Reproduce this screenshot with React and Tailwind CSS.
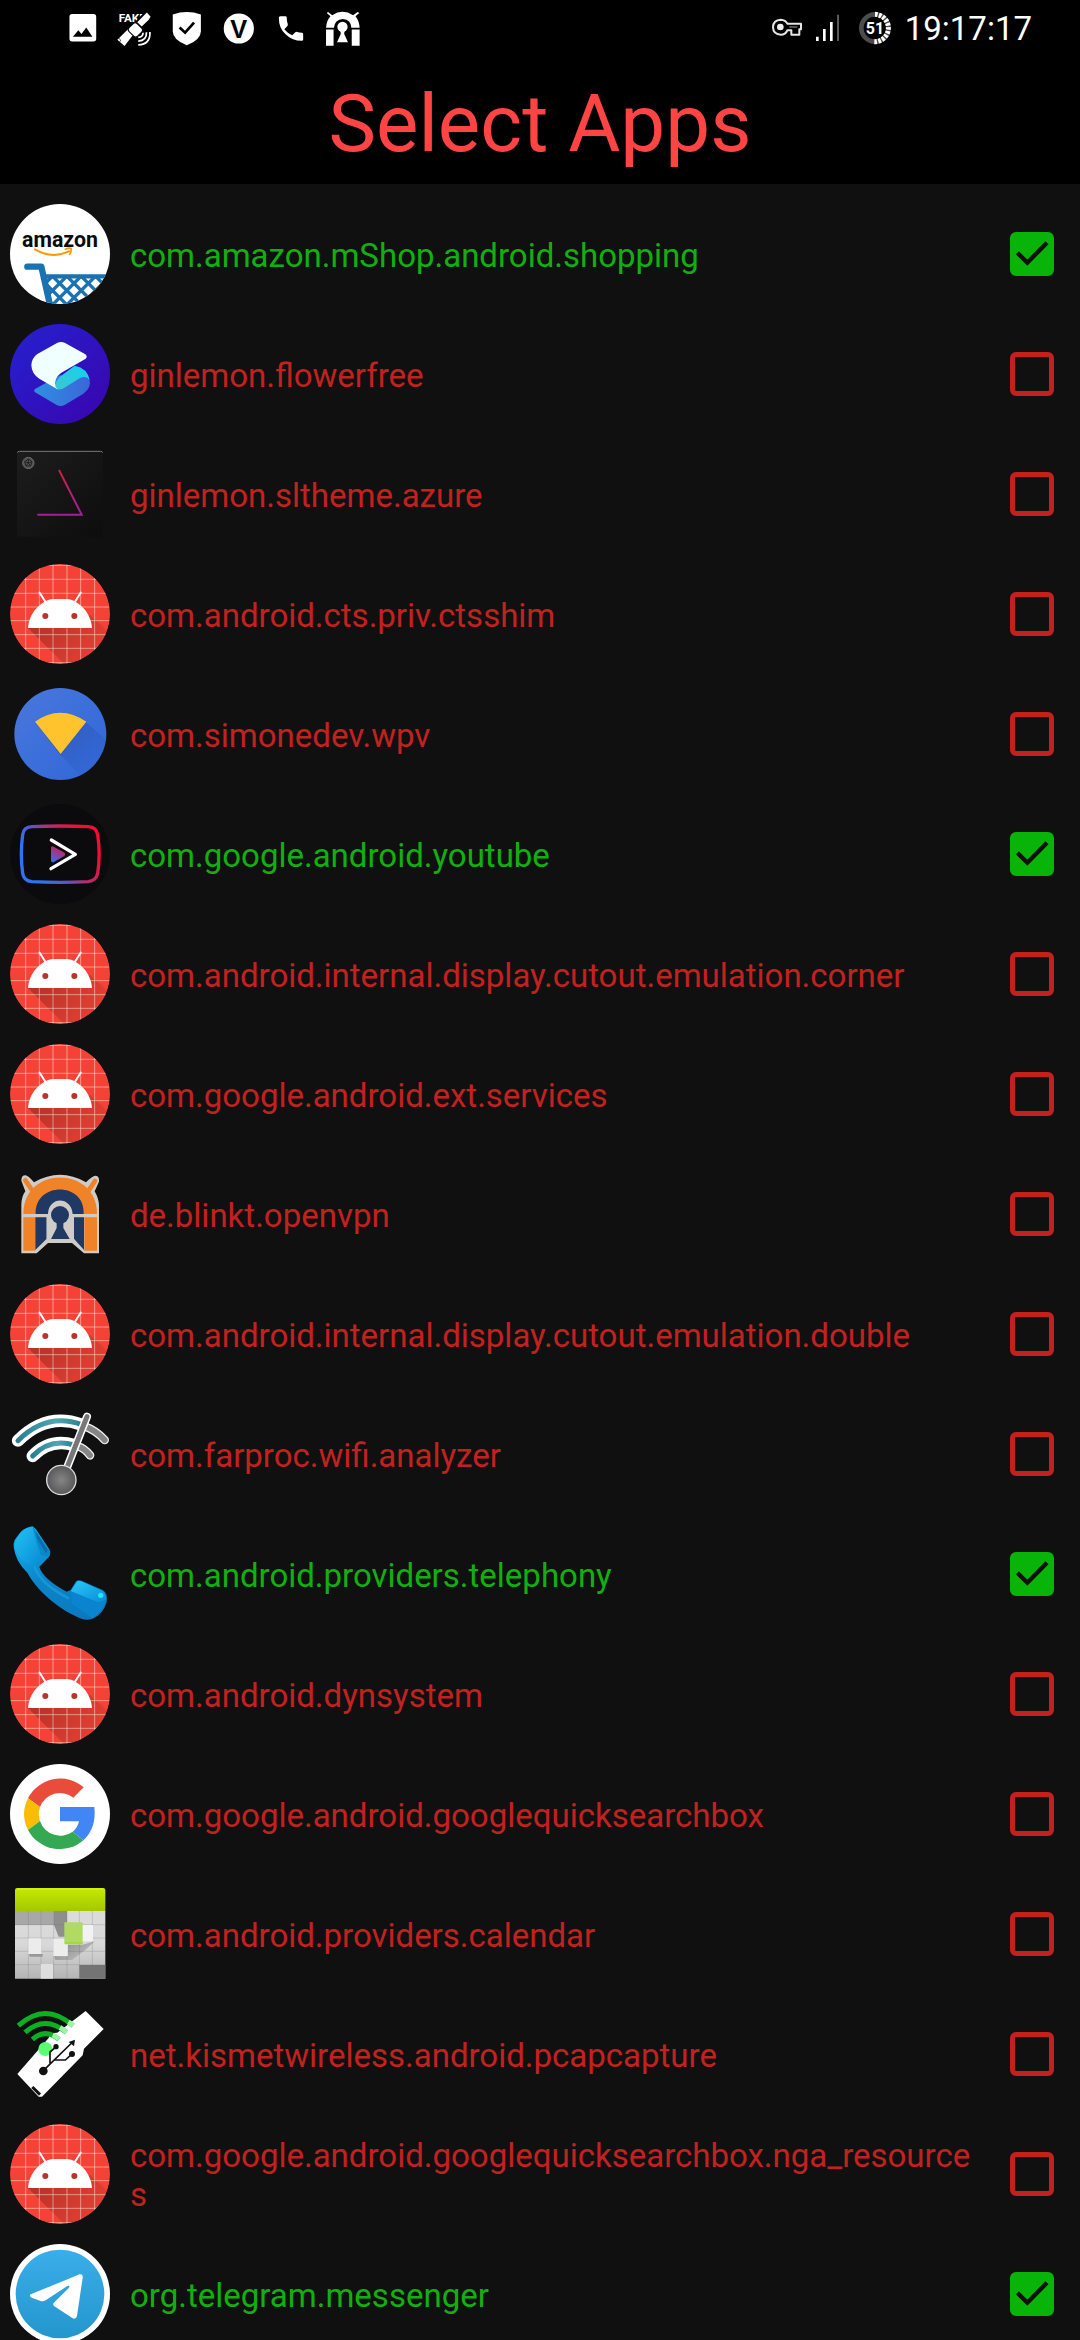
import { useState } from "react";

const statusIcon = "h-9 w-9 shrink-0";

function PictureIcon() {
  return (
    <svg className={statusIcon} viewBox="189 32 105 105" aria-hidden="true">
      <rect x="202" y="44" width="78" height="80" rx="8" fill="#fff" />
      <path d="M212 110 L228 91 L237 102 L251 83 L269 110z" fill="#000" />
    </svg>
  );
}

function SatelliteIcon() {
  return (
    <svg className={statusIcon} viewBox="340 32 105 105" aria-hidden="true">
      <text x="345" y="67" fill="#fff" fontFamily="Roboto, sans-serif" fontWeight="700" fontSize="34">FAKE</text>
      <path d="M423 35 L443 57 L409 92 L385 74z" fill="#000" />
      <path d="M427 39 L438 52 L432 61 L412 80 L399 68z M372 88 L387 104 L362 137 L341 119z" fill="#fff" />
      <rect x="376" y="73" width="35" height="33" rx="8" transform="rotate(45 393 90)" fill="#fff" stroke="#000" strokeWidth="3" />
      <path d="M343 112 L351 120 L347 126" stroke="#000" strokeWidth="2" fill="none" />
      <g fill="none" stroke="#fff" strokeWidth="5">
        <path d="M416 98 Q416 110 402 112" />
        <path d="M426 97 Q427 121 402 123" />
        <path d="M436 96 Q438 132 402 134" />
      </g>
    </svg>
  );
}

function ShieldIcon() {
  return (
    <svg className={statusIcon} viewBox="491 32 105 105" aria-hidden="true">
      <path d="M502 45 Q543 31 584 45 V94 Q584 119 543 135 Q502 119 502 94z" fill="#fff" />
      <path d="M522 83 L538 98 L564 69" fill="none" stroke="#000" strokeWidth="8" />
    </svg>
  );
}

function VIcon() {
  return (
    <svg className={statusIcon} viewBox="642 32 105 105" aria-hidden="true">
      <circle cx="694" cy="86" r="44" fill="#fff" />
      <text x="694" y="113" textAnchor="middle" fontFamily="Liberation Sans, sans-serif" fontWeight="700" fontSize="74">V</text>
    </svg>
  );
}

function CallIcon() {
  return (
    <svg className={statusIcon} viewBox="793 32 105 105" aria-hidden="true">
      <path
        d="M814 50 H829 Q833 50 833 54 Q833 64 836 73 Q837 76 835 79 L826 88 Q835 99 849 106 L858 97 Q860 95 863 96 Q870 98 877 98 Q881 98 881 102 V118 Q881 122 877 122 Q848 122 829 102 Q810 84 810 55 Q810 50 814 50z"
        fill="#fff"
      />
    </svg>
  );
}

function TunnelIcon() {
  return (
    <svg className={statusIcon} viewBox="944 32 105 105" aria-hidden="true">
      <path d="M947 84 Q948 63 960 50 L949 41 L953 38 L965 47 Q995 27 1026 47 L1039 38 L1044 41 L1033 50 Q1044 64 1045 84 H1021 Q1020 60 996 58 Q972 60 970 84z" fill="#fff" />
      <path d="M947 89 H969 V136 H947z M1022 89 H1045 V136 H1022z" fill="#fff" />
      <circle cx="995" cy="81" r="15" fill="#fff" />
      <path d="M989 90 H1001 L1000 102 L1011 126 H979 L990 102z" fill="#fff" />
    </svg>
  );
}

function KeyIcon() {
  return (
    <svg className={statusIcon} viewBox="207 30 108 108" aria-hidden="true">
      <path
        d="M262 71 H303 V88 H298 V104 H274 V91 H262 Q257 104 242 104 Q219 102 219 81 Q220 60 242 59 Q257 60 262 71z"
        fill="none" stroke="#e6e6e6" strokeWidth="6" strokeLinejoin="round"
      />
      <path d="M268 81 H292" stroke="#777" strokeWidth="4" />
      <circle cx="241" cy="81" r="10" fill="#eee" />
    </svg>
  );
}

function SignalIcon() {
  return (
    <svg className={statusIcon} viewBox="327 30 108 108" aria-hidden="true">
      <path d="M348 110 h8 v13 h-8z M369 87 h8 v36 h-8z M390 66 h8 v57 h-8z" fill="#fff" />
      <path d="M411 44 h6 v79 h-6z" fill="#5a5a5a" />
    </svg>
  );
}

function BatteryIcon() {
  return (
    <svg className={statusIcon} viewBox="471 30 108 108" role="img" aria-label="Battery 51 percent">
      <circle cx="525" cy="84" r="41" fill="none" stroke="#4c4c4c" strokeWidth="14" />
      <path d="M525 43 A41 41 0 0 1 523 125" fill="none" stroke="#fff" strokeWidth="15" strokeDasharray="8 4" />
      <text x="525" y="101" textAnchor="middle" fill="#fff" fontFamily="Roboto, sans-serif" fontWeight="700" fontSize="48">51</text>
    </svg>
  );
}

const appIcon = "h-[100px] w-[100px] shrink-0";

function AmazonIcon() {
  return (
    <svg className={appIcon} viewBox="30 42 300 300" aria-hidden="true">
      <defs>
        <clipPath id="amazon-disc"><circle cx="180" cy="192" r="150" /></clipPath>
        <clipPath id="amazon-basket"><path d="M136 256 H340 V350 H152z" /></clipPath>
      </defs>
      <circle cx="180" cy="192" r="150" fill="#fff" />
      <text x="180" y="171" textAnchor="middle" fontFamily="Roboto, sans-serif" fontWeight="700" fontSize="64" fill="#0a0a0a">amazon</text>
      <path d="M105 178 Q155 208 207 184" fill="none" stroke="#f90" strokeWidth="6" strokeLinecap="round" />
      <path d="M196 178 Q210 172 214 176 Q214 184 209 193" fill="none" stroke="#f90" strokeWidth="5" strokeLinecap="round" />
      <g clipPath="url(#amazon-disc)" fill="none" stroke="#1a72b0">
        <path d="M82 230 H124 L150 345" strokeWidth="19" strokeLinecap="round" strokeLinejoin="round" />
        <path d="M136 259 H340" strokeWidth="13" />
        <g clipPath="url(#amazon-basket)" strokeWidth="10">
          <path d="M70 256 l100 100 M112 256 l100 100 M155 256 l100 100 M198 256 l100 100 M241 256 l100 100 M284 256 l100 100" />
          <path d="M160 256 l-100 100 M203 256 l-100 100 M246 256 l-100 100 M289 256 l-100 100 M332 256 l-100 100 M375 256 l-100 100" />
        </g>
      </g>
    </svg>
  );
}

function SmartLauncherIcon() {
  return (
    <svg className={appIcon} viewBox="30 402 300 300" aria-hidden="true">
      <defs>
        <linearGradient id="sl-bg" x1="0" y1="0" x2="1" y2="1">
          <stop offset="0" stopColor="#2422d0" />
          <stop offset="1" stopColor="#3a04ae" />
        </linearGradient>
        <linearGradient id="sl-low" x1="0" y1="0" x2="1" y2="0">
          <stop offset="0" stopColor="#2e8fe2" />
          <stop offset="1" stopColor="#3a66d8" />
        </linearGradient>
        <linearGradient id="sl-mid" x1="0" y1="1" x2="1" y2="0">
          <stop offset="0" stopColor="#3cc6d0" />
          <stop offset="1" stopColor="#12d2f0" />
        </linearGradient>
      </defs>
      <circle cx="180" cy="552" r="150" fill="url(#sl-bg)" />
      <path d="M105 597 L180 556 L246 560 Q262 556 268 566 Q276 592 250 611 L194 645 Q182 651 170 645 L104 606 Q100 601 105 597z" fill="url(#sl-low)" />
      <path d="M180 560 L224 527 Q262 534 269 570 Q259 556 240 564 L192 594 Q182 600 170 598 Q158 584 180 560z" fill="url(#sl-mid)" />
      <path d="M171 459 Q182 453 194 458 L256 493 Q264 500 257 506 L184 548 Q160 565 167 590 L172 598 L118 566 Q95 552 94 526 Q95 504 112 492z" fill="#f0ffff" />
    </svg>
  );
}

function AzureIcon() {
  return (
    <svg className={appIcon} viewBox="30 762 300 300" aria-hidden="true">
      <defs>
        <linearGradient id="azure-bg" x1="0" y1="0" x2="1" y2="1">
          <stop offset="0" stopColor="#1d1d1d" />
          <stop offset="1" stopColor="#0d0d0d" />
        </linearGradient>
        <linearGradient id="azure-line" gradientUnits="userSpaceOnUse" x1="178" y1="840" x2="210" y2="975">
          <stop offset="0" stopColor="#cf2038" />
          <stop offset="1" stopColor="#a0209a" />
        </linearGradient>
      </defs>
      <rect x="51" y="783" width="258" height="257" rx="6" fill="url(#azure-bg)" />
      <path d="M52 788 Q53 784 58 784 H302 Q307 784 308 788" fill="none" stroke="#777" strokeWidth="3" />
      <circle cx="85" cy="819" r="17" fill="#555" stroke="#666" strokeWidth="3" />
      <path d="M85 807 L96 815 L92 828 H78 L74 815z M85 807 V819 M74 815 L85 819 L96 815 M78 828 L85 819 L92 828" fill="none" stroke="#222" strokeWidth="3" />
      <path d="M177 840 L245 974 H112" fill="none" stroke="url(#azure-line)" strokeWidth="6" />
    </svg>
  );
}

function AndroidIcon() {
  return (
    <svg className={appIcon} viewBox="30 42 300 300" aria-hidden="true">
      <defs>
        <clipPath id="android-disc"><circle cx="180" cy="192" r="150" /></clipPath>
        <linearGradient id="android-shade" gradientUnits="userSpaceOnUse" x1="120" y1="230" x2="250" y2="330">
          <stop offset="0" stopColor="#000" stopOpacity="0.24" />
          <stop offset="1" stopColor="#000" stopOpacity="0.08" />
        </linearGradient>
      </defs>
      <g clipPath="url(#android-disc)">
        <circle cx="180" cy="192" r="150" fill="#f44336" />
        <path d="M84 234 L200 350 H340 V260 L270 194z" fill="url(#android-shade)" />
        <path
          d="M77 40 V345 M118 40 V345 M159 40 V345 M201 40 V345 M242 40 V345 M284 40 V345 M30 46 H330 M30 88 H330 M30 130 H330 M30 171 H330 M30 212 H330 M30 254 H330 M30 295 H330 M30 338 H330"
          stroke="#fff" strokeOpacity="0.45" strokeWidth="3"
        />
      </g>
      <path d="M84 234 C86 196 112 163 144 150 Q152 147 161 147 H199 Q208 147 216 150 C248 163 274 196 276 234z" fill="#fff" />
      <path d="M119 128 L138 158 M242 128 L223 158" stroke="#fff" strokeWidth="6" strokeLinecap="round" />
      <circle cx="136" cy="198" r="9" fill="#b8342b" />
      <circle cx="223" cy="198" r="9" fill="#b8342b" />
    </svg>
  );
}

function WpvIcon() {
  return (
    <svg className={appIcon} viewBox="30 402 300 300" aria-hidden="true">
      <defs>
        <linearGradient id="wpv-bg" x1="0" y1="0" x2="1" y2="1">
          <stop offset="0" stopColor="#4a78dc" />
          <stop offset="1" stopColor="#2f66d8" />
        </linearGradient>
        <linearGradient id="wpv-shade" gradientUnits="userSpaceOnUse" x1="210" y1="550" x2="280" y2="640">
          <stop offset="0" stopColor="#1c3f90" stopOpacity="0.3" />
          <stop offset="1" stopColor="#1c3f90" stopOpacity="0.05" />
        </linearGradient>
        <clipPath id="wpv-disc"><circle cx="181" cy="552" r="138" /></clipPath>
      </defs>
      <circle cx="181" cy="552" r="138" fill="url(#wpv-bg)" />
      <path d="M182 614 L260 518 L340 590 V700 H262z" fill="url(#wpv-shade)" clipPath="url(#wpv-disc)" />
      <path d="M106 518 Q180 468 259 518 L182 616z" fill="#254fa8" fillOpacity="0.6" />
      <path d="M105 515 Q180 461 259 515 L182 612z" fill="#ffc42d" />
    </svg>
  );
}

function VancedIcon() {
  return (
    <svg className={appIcon} viewBox="30 762 300 300" aria-hidden="true">
      <defs>
        <linearGradient id="vanced-frame" gradientUnits="userSpaceOnUse" x1="90" y1="960" x2="260" y2="850">
          <stop offset="0.1" stopColor="#2f72f4" />
          <stop offset="0.35" stopColor="#5a58c8" />
          <stop offset="0.6" stopColor="#b0306c" />
          <stop offset="0.95" stopColor="#f60c36" />
        </linearGradient>
        <linearGradient id="vanced-play" x1="0" y1="1" x2="0.5" y2="0">
          <stop offset="0" stopColor="#2f72f4" />
          <stop offset="1" stopColor="#d01c5c" />
        </linearGradient>
      </defs>
      <circle cx="180" cy="912" r="150" fill="#0b0b0d" />
      <path d="M96 830 Q180 826 264 830 Q289 831 293 854 Q302 912 293 970 Q289 993 264 995 Q180 999 96 995 Q71 993 68 970 Q60 912 68 854 Q71 831 96 830z" fill="none" stroke="url(#vanced-frame)" strokeWidth="10" />
      <path d="M153 892 Q155 887 161 890 L194 908 Q198 913 194 917 L161 937 Q154 938 153 932z" fill="url(#vanced-play)" />
      <path d="M154 870 L226 913 L153 956" fill="none" stroke="#fff" strokeWidth="10" strokeLinecap="round" strokeLinejoin="round" />
    </svg>
  );
}

function OpenVpnIcon() {
  return (
    <svg className={appIcon} viewBox="30 42 300 300" aria-hidden="true">
      <path d="M64 310 V165 Q64 140 76 124 L64 92 Q64 76 76 76 Q84 76 102 97 Q180 52 258 97 Q278 76 287 77 Q299 78 297 95 L284 124 Q296 145 297 165 V310 H252 L216 279 H144 L110 310z" fill="#cfcbc6" />
      <path d="M76 91 L96 120 M285 93 L264 124" stroke="#f08228" strokeWidth="14" strokeLinecap="round" />
      <path d="M70 192 C70 46 291 46 291 192z" fill="#f08228" />
      <path d="M70 202 H106 V302 H70z M253 202 H291 V302 H253z" fill="#f08228" />
      <path d="M107 192 C104 94 256 94 251 192z M106 202 H140 V266 L106 300z M222 202 H252 V300 L222 266z" fill="#1f3864" />
      <path d="M144 192 C146 138 214 138 218 192 L222 202 V268 H140 V202z" fill="#cfcbc6" />
      <circle cx="180" cy="195" r="27" fill="#1f3864" />
      <path d="M170 218 H190 V234 L209 267 H153 L170 234z" fill="#1f3864" />
    </svg>
  );
}

function WifiAnalyzerIcon() {
  return (
    <svg className={appIcon} viewBox="30 42 300 300" aria-hidden="true">
      <defs>
        <linearGradient id="wa-wave" x1="0" y1="0" x2="1" y2="0">
          <stop offset="0" stopColor="#2a7f92" />
          <stop offset="0.6" stopColor="#4fa6b4" />
          <stop offset="1" stopColor="#2a7f92" />
        </linearGradient>
        <radialGradient id="wa-ball">
          <stop offset="0" stopColor="#858585" />
          <stop offset="1" stopColor="#58585a" />
        </radialGradient>
      </defs>
      <g fill="none" strokeLinecap="round">
        <path d="M54 152 Q140 66 245 104 M98 198 Q150 144 222 165" stroke="#fff" strokeWidth="37" />
        <path d="M252 108 Q290 122 314 150 M232 168 Q256 176 270 196" stroke="#f2f2f2" strokeWidth="26" />
        <path d="M252 108 Q290 122 314 150 M232 168 Q256 176 270 196" stroke="#858585" strokeWidth="18" />
        <path d="M54 152 Q140 66 245 104" stroke="url(#wa-wave)" strokeWidth="15" />
        <path d="M98 198 Q150 144 222 165" stroke="url(#wa-wave)" strokeWidth="15" />
        <path d="M261 80 L202 230" stroke="#fff" strokeWidth="24" />
        <path d="M261 80 L202 230" stroke="#77777a" strokeWidth="15" />
      </g>
      <circle cx="184" cy="270" r="44" fill="url(#wa-ball)" stroke="#ddd" strokeWidth="4" />
    </svg>
  );
}

function TelephonyIcon() {
  return (
    <svg className={appIcon} viewBox="30 402 300 300" aria-hidden="true">
      <defs>
        <linearGradient id="tel-body" x1="0" y1="0" x2="0.8" y2="1">
          <stop offset="0" stopColor="#10b4f0" />
          <stop offset="0.5" stopColor="#0c84c8" />
          <stop offset="1" stopColor="#0a78c0" />
        </linearGradient>
        <linearGradient id="tel-cap" x1="0" y1="0" x2="1" y2="1">
          <stop offset="0" stopColor="#2cc8f8" />
          <stop offset="1" stopColor="#068cd6" />
        </linearGradient>
      </defs>
      <path d="M60 428 Q76 411 98 409 L108 418 L148 478 Q154 492 146 502 L118 530 Q128 566 200 605 L212 600 L228 574 Q236 568 248 574 L308 600 Q324 610 320 636 Q310 672 278 686 Q260 692 244 686 C190 664 120 616 82 548 Q64 530 54 512 Q34 470 44 450z" fill="url(#tel-body)" />
      <path d="M62 430 Q78 412 98 411 L106 456 L120 522 L102 528 Q60 520 46 478 Q40 456 62 430z" fill="url(#tel-cap)" fillOpacity="0.7" />
      <path d="M98 411 L147 480 Q152 494 144 500 L122 494 L106 440z" fill="#0788c8" />
      <path d="M108 424 L142 480 L138 490 L112 446z" fill="#086da8" />
      <path d="M232 574 Q238 571 247 575 L306 602 Q320 610 318 630 L296 638 L212 604z" fill="url(#tel-cap)" />
      <path d="M212 604 L296 638 L318 632 Q306 670 276 683 L216 642z" fill="#0a84cf" />
      <circle cx="302" cy="616" r="8" fill="#25e4f8" />
      <path d="M104 532 Q124 584 204 624" fill="none" stroke="#18a0e0" strokeWidth="8" strokeOpacity="0.7" strokeLinecap="round" />
    </svg>
  );
}

function GoogleIcon() {
  return (
    <svg className={appIcon} viewBox="30 42 300 300" aria-hidden="true">
      <circle cx="180" cy="192" r="150" fill="#fff" />
      <path d="M251 112 L220 143 A64 64 0 0 0 120 171 L84 145 A108 108 0 0 1 251 112z" fill="#ea4c3c" />
      <path d="M84 145 L120 171 Q113 192 120 213 L84 240 Q60 192 84 145z" fill="#fbbc05" />
      <path d="M84 240 L120 213 A64 64 0 0 0 218 245 L250 271 A108 108 0 0 1 84 240z" fill="#34a853" />
      <path d="M180 171 H283 Q290 234 250 271 L218 245 Q233 234 237 214 H180z" fill="#4285f4" />
    </svg>
  );
}

function CalendarIcon() {
  return (
    <svg className={appIcon} viewBox="30 402 300 300" aria-hidden="true">
      <defs>
        <linearGradient id="cal-top" x1="0" y1="0" x2="0" y2="1">
          <stop offset="0" stopColor="#c6ea00" />
          <stop offset="1" stopColor="#a4c800" />
        </linearGradient>
        <linearGradient id="cal-body" x1="0" y1="0" x2="0" y2="1">
          <stop offset="0" stopColor="#dcdcdc" />
          <stop offset="0.5" stopColor="#d8d8d8" />
          <stop offset="1" stopColor="#b4b4b4" />
        </linearGradient>
        <linearGradient id="cal-shade" x1="0" y1="0" x2="1" y2="1">
          <stop offset="0" stopColor="#222" stopOpacity="0.5" />
          <stop offset="1" stopColor="#222" stopOpacity="0" />
        </linearGradient>
      </defs>
      <path d="M45 483 H316 V686 H45z" fill="url(#cal-body)" />
      <path d="M45 483 H201 V525 H45z" fill="#a8a8a8" />
      <path d="M162 483 H201 V560 H176 L162 525z" fill="#8e8e8e" />
      <path d="M238 645 H316 V686 H238z" fill="#747474" />
      <path d="M85 483 V686 M123 483 V686 M161 483 V686 M201 483 V686 M238 483 V686 M277 483 V686 M45 524 H316 M45 564 H316 M45 604 H316 M45 644 H316" stroke="#777" strokeOpacity="0.4" strokeWidth="2" />
      <path d="M204 584 H248 L284 574 L256 600 L216 630 H166 L162 619 H204z" fill="url(#cal-shade)" />
      <path d="M86 612 H128 V620 H90z" fill="#999" />
      <rect x="85" y="565" width="39" height="47" fill="#ececec" />
      <rect x="160" y="566" width="43" height="52" fill="#ededed" />
      <rect x="122" y="642" width="37" height="44" fill="#dedede" />
      <rect x="246" y="525" width="33" height="49" fill="#f2f2f2" />
      <rect x="193" y="517" width="55" height="66" rx="3" fill="#b0da64" />
      <path d="M195 579 H247" stroke="#9be01c" strokeWidth="5" />
      <path d="M45 483 V420 Q45 414 52 414 H309 Q316 414 316 420 V483z" fill="url(#cal-top)" />
      <path d="M50 417 H311" stroke="#d8fa20" strokeWidth="3" />
    </svg>
  );
}

function PcapIcon() {
  return (
    <svg className={appIcon} viewBox="30 762 300 300" aria-hidden="true">
      <path d="M52 972 L146 864 L150 850 L172 848 L257 783 L311 837 L252 896 L248 916 L126 1040 H116z" fill="#fff" />
      <g fill="none" stroke="#0cb022" strokeWidth="15">
        <path d="M55 827 Q136 754 219 827" />
        <path d="M75 847 Q136 794 199 847" />
        <path d="M97 868 Q136 834 177 868" />
      </g>
      <g fill="none" stroke="#9bf5a8" strokeWidth="15">
        <path d="M205 816 Q212 820 219 827" />
        <path d="M180 832 Q190 838 199 847" />
        <path d="M158 855 Q168 859 177 868" />
      </g>
      <circle cx="136" cy="897" r="21" fill="#58ff70" />
      <g fill="none" stroke="#111" strokeWidth="5">
        <path d="M130 962 L218 876 M150 940 V906 L166 892 M164 930 H196 L214 914" />
      </g>
      <circle cx="130" cy="963" r="13" fill="#111" />
      <circle cx="168" cy="890" r="8" fill="#111" />
      <circle cx="216" cy="912" r="9" fill="#111" />
      <path d="M206 876 L225 869 L222 889z" fill="#111" />
      <path d="M97 1011 L120 1034" stroke="#111" strokeWidth="9" />
    </svg>
  );
}

function TelegramIcon() {
  return (
    <svg className={appIcon} viewBox="30 402 300 300" aria-hidden="true">
      <defs>
        <linearGradient id="tg-bg" x1="0" y1="0" x2="0" y2="1">
          <stop offset="0" stopColor="#3aaeea" />
          <stop offset="1" stopColor="#2496cd" />
        </linearGradient>
      </defs>
      <circle cx="180" cy="552" r="150" fill="#fff" />
      <circle cx="180" cy="552" r="133" fill="url(#tg-bg)" />
      <path d="M92 553 L239 493 Q249 491 248 503 L231 618 Q228 629 218 625 L163 589 Q156 583 163 577 L207 533 Q212 525 202 528 L137 571 Q130 575 122 573 L95 563 Q86 558 92 553z" fill="#fff" />
    </svg>
  );
}

const APPS = [
  { name: "com.amazon.mShop.android.shopping", Icon: AmazonIcon, on: true },
  { name: "ginlemon.flowerfree", Icon: SmartLauncherIcon },
  { name: "ginlemon.sltheme.azure", Icon: AzureIcon },
  { name: "com.android.cts.priv.ctsshim", Icon: AndroidIcon },
  { name: "com.simonedev.wpv", Icon: WpvIcon },
  { name: "com.google.android.youtube", Icon: VancedIcon, on: true },
  { name: "com.android.internal.display.cutout.emulation.corner", Icon: AndroidIcon },
  { name: "com.google.android.ext.services", Icon: AndroidIcon },
  { name: "de.blinkt.openvpn", Icon: OpenVpnIcon },
  { name: "com.android.internal.display.cutout.emulation.double", Icon: AndroidIcon },
  { name: "com.farproc.wifi.analyzer", Icon: WifiAnalyzerIcon },
  { name: "com.android.providers.telephony", Icon: TelephonyIcon, on: true },
  { name: "com.android.dynsystem", Icon: AndroidIcon },
  { name: "com.google.android.googlequicksearchbox", Icon: GoogleIcon },
  { name: "com.android.providers.calendar", Icon: CalendarIcon },
  { name: "net.kismetwireless.android.pcapcapture", Icon: PcapIcon },
  { name: "com.google.android.googlequicksearchbox.nga_resources", Icon: AndroidIcon },
  { name: "org.telegram.messenger", Icon: TelegramIcon, on: true },
];

function AppRow({ name, Icon, on }) {
  const [checked, setChecked] = useState(Boolean(on));
  return (
    <li>
      <label className="flex min-h-[120px] cursor-pointer items-center pl-[10px] pr-[26px]">
        <Icon />
        <span
          className={
            checked
              ? "ml-5 mr-6 min-w-0 flex-1 pt-0.5 text-[33px] leading-[39px] break-all text-[#11b011]"
              : "ml-5 mr-6 min-w-0 flex-1 pt-0.5 text-[33px] leading-[39px] break-all text-[#c32020]"
          }
        >
          {name}
        </span>
        <span className="grid shrink-0 place-items-center">
          <input
            type="checkbox"
            checked={checked}
            onChange={(e) => setChecked(e.target.checked)}
            className="peer col-start-1 row-start-1 h-11 w-11 appearance-none rounded-md border-[5px] border-[#c32020] checked:border-[#08b408] checked:bg-[#08b408]"
          />
          <svg className="pointer-events-none invisible col-start-1 row-start-1 h-11 w-11 peer-checked:visible" viewBox="150 126 132 132" aria-hidden="true">
            <path d="M172 188 L202 218 L261 158" fill="none" stroke="#101010" strokeWidth="13" />
          </svg>
        </span>
      </label>
    </li>
  );
}

export default function App() {
  return (
    <div className="flex h-screen flex-col bg-[#101010] font-[Roboto,sans-serif]">
      <header className="shrink-0 bg-black pb-3">
        <div className="flex h-14 items-center justify-between pl-[65px] pr-12">
          <div className="flex items-center gap-4">
            <PictureIcon />
            <SatelliteIcon />
            <ShieldIcon />
            <VIcon />
            <CallIcon />
            <TunnelIcon />
          </div>
          <div className="flex items-center">
            <KeyIcon />
            <span className="ml-1 flex"><SignalIcon /></span>
            <span className="ml-3 flex"><BatteryIcon /></span>
            <time className="ml-3 pt-0.5 text-[33px] leading-10 text-white">19:17:17</time>
          </div>
        </div>
        <h1 className="pt-5 text-center text-[80px] leading-24 text-[#ff4444]">Select Apps</h1>
      </header>
      <main className="min-h-0 flex-1 overflow-y-auto pt-[10px] [scrollbar-width:none]">
        <ul>
          {APPS.map((app) => (
            <AppRow key={app.name} {...app} />
          ))}
        </ul>
      </main>
    </div>
  );
}
